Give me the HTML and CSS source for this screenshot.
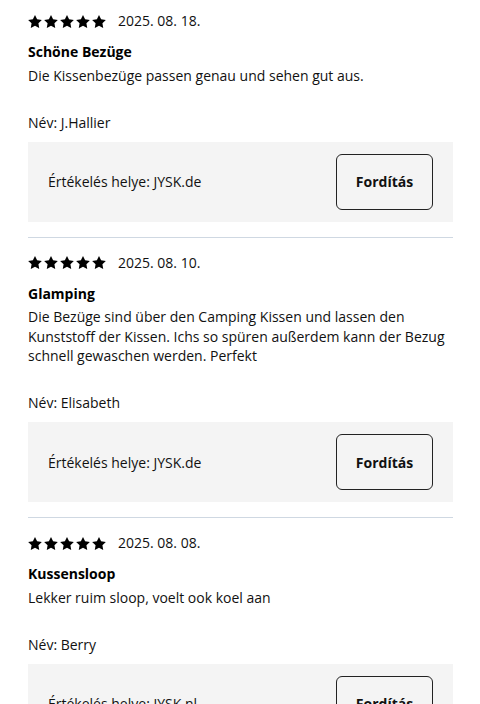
FILE: index.html
```html
<!DOCTYPE html>
<html lang="hu">
<head>
  <meta charset="UTF-8">
  <meta name="viewport" content="width=device-width, initial-scale=1.0"/>
  <title>Értékelések</title>
  <link rel="stylesheet" href="styles.css">
</head>
<body>
  <svg width="0" height="0" class="defs">
    <symbol id="star" viewBox="2 2 20 19">
      <path d="M12 2l3.09 6.26L22 9.27l-5 4.87 1.18 6.88L12 17.77l-6.18 3.25L7 14.14 2 9.27l6.91-1.01L12 2z"/>
    </symbol>
  </svg>
  <main class="reviews">
    <article class="review">
      <div class="meta">
        <span class="stars">
          <svg><use href="#star"/></svg><svg><use href="#star"/></svg><svg><use href="#star"/></svg><svg><use href="#star"/></svg><svg><use href="#star"/></svg>
        </span>
        <span class="date">2025. 08. 18.</span>
      </div>
      <h3 class="title">Schöne Bezüge</h3>
      <p class="text">Die Kissenbezüge passen genau und sehen gut aus.</p>
      <p class="author">Név: J.Hallier</p>
      <div class="source">
        <span>Értékelés helye: JYSK.de</span>
        <button>Fordítás</button>
      </div>
    </article>

    <article class="review">
      <div class="meta">
        <span class="stars">
          <svg><use href="#star"/></svg><svg><use href="#star"/></svg><svg><use href="#star"/></svg><svg><use href="#star"/></svg><svg><use href="#star"/></svg>
        </span>
        <span class="date">2025. 08. 10.</span>
      </div>
      <h3 class="title">Glamping</h3>
      <p class="text">Die Bezüge sind über den Camping Kissen und lassen den Kunststoff der Kissen. Ichs so spüren außerdem kann der Bezug schnell gewaschen werden. Perfekt</p>
      <p class="author">Név: Elisabeth</p>
      <div class="source">
        <span>Értékelés helye: JYSK.de</span>
        <button>Fordítás</button>
      </div>
    </article>

    <article class="review">
      <div class="meta">
        <span class="stars">
          <svg><use href="#star"/></svg><svg><use href="#star"/></svg><svg><use href="#star"/></svg><svg><use href="#star"/></svg><svg><use href="#star"/></svg>
        </span>
        <span class="date">2025. 08. 08.</span>
      </div>
      <h3 class="title">Kussensloop</h3>
      <p class="text">Lekker ruim sloop, voelt ook koel aan</p>
      <p class="author">Név: Berry</p>
      <div class="source">
        <span>Értékelés helye: JYSK.nl</span>
        <button>Fordítás</button>
      </div>
    </article>
  </main>
</body>
</html>
```

FILE: styles.css
```css
body {
  font-family: 'Open Sans', sans-serif;
  font-size: 14px;
  color: #111;
  background: #fff;
  margin: 0;
  padding: 0;
}
.defs {
  position: absolute;
}
.reviews {
  padding: 0 27px 0 28px;
}
.review {
  padding: 15px 0 15px;
  border-bottom: 1px solid #cfd8e2;
}
.review:first-child {
  padding-top: 11px;
}
.meta {
  display: flex;
  align-items: center;
  gap: 12px;
  height: 20px;
}
.stars {
  display: flex;
  gap: 2px;
}
.stars svg {
  width: 14px;
  height: 13px;
  fill: #000;
}
.date {
  line-height: 20px;
}
.title {
  font-size: 14px;
  font-weight: 700;
  line-height: 20px;
  margin: 11px 0 3.5px;
  color: #000;
}
.text {
  margin: 0;
  line-height: 19.6px;
}
.author {
  margin: 27.5px 0 9px;
  line-height: 20px;
}
.source {
  display: flex;
  align-items: center;
  justify-content: space-between;
  background: #f4f4f4;
  padding: 12px 20px;
}
.source button {
  font-family: inherit;
  font-size: 14px;
  font-weight: 700;
  color: #111;
  background: transparent;
  border: 1px solid #222;
  border-radius: 6px;
  width: 97px;
  height: 56px;
  cursor: pointer;
}
```
